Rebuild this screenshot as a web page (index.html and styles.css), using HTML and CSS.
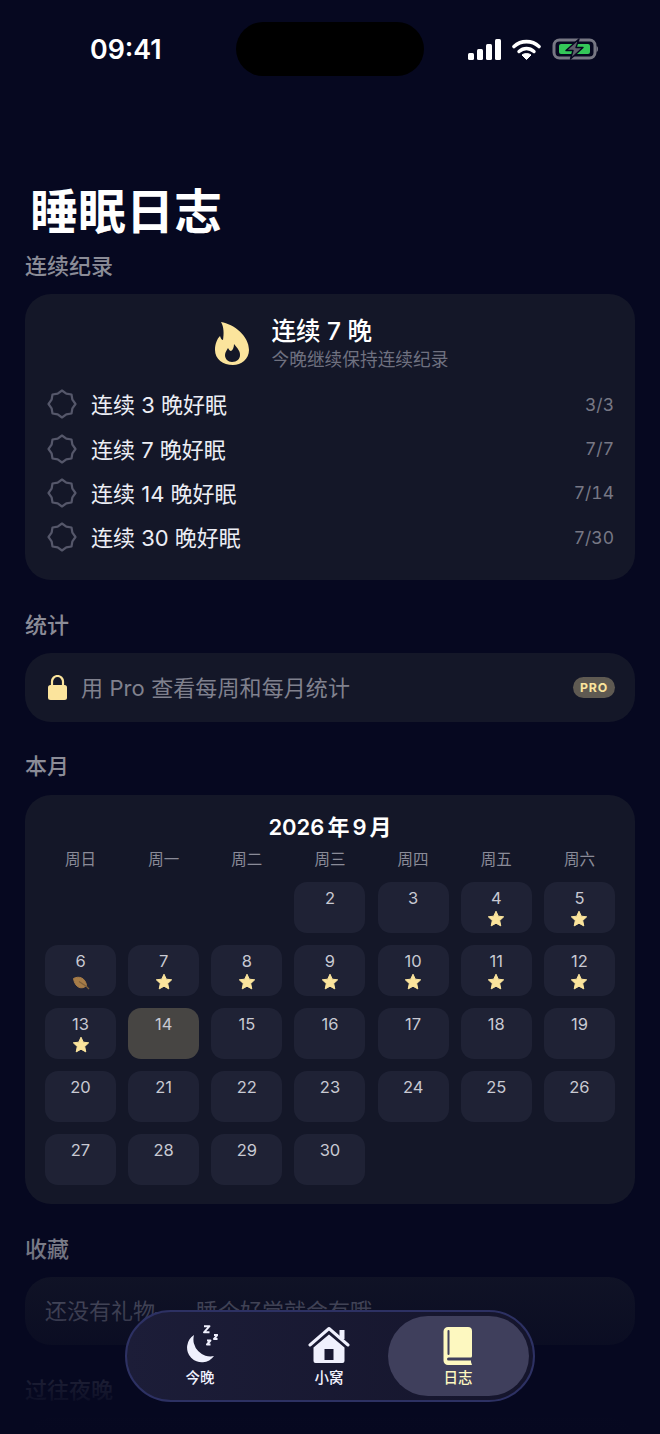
FILE: index.html
```html
<!DOCTYPE html>
<html lang="zh-CN">
<head>
    <meta charset="UTF-8">
    <meta name="viewport" content="width=device-width, initial-scale=1.0">
    <title>睡眠日志</title>
    <link rel="stylesheet" href="styles.css">
</head>
<body>
<svg class="defs" width="0" height="0">
    <symbol id="star" viewBox="0 0 18 18">
        <path d="M9 1.200l2.300 5 5.400.6-4 3.700 1.100 5.400L9 13.200l-4.800 2.700 1.100-5.400-4-3.700 5.400-.6z" fill="#fbe49c" stroke="#fbe49c" stroke-linejoin="round"/>
    </symbol>
    <symbol id="badge" viewBox="0 0 30 30">
        <polygon points="15,1.500 19.300,4.600 24.500,5.500 25.400,10.700 28.500,15 25.400,19.300 24.500,24.500 19.300,25.400 15,28.500 10.700,25.400 5.500,24.500 4.600,19.300 1.500,15 4.600,10.700 5.500,5.500 10.700,4.600" fill="none" stroke="#55576a" stroke-width="2.200" stroke-linejoin="round"/>
    </symbol>
</svg>

<div class="page">
    <div class="status-bar">
        <span class="time">09:41</span>
        <div class="island"></div>
        <div class="status-icons">
            <svg width="33" height="21" viewBox="0 0 33 21">
                <rect x="0" y="14" width="6" height="7" rx="1.500" fill="#fff"/>
                <rect x="9" y="10" width="6" height="11" rx="1.500" fill="#fff"/>
                <rect x="18" y="5" width="6" height="16" rx="1.500" fill="#fff"/>
                <rect x="27" y="0" width="6" height="21" rx="1.500" fill="#fff"/>
            </svg>
            <svg width="29" height="21" viewBox="0 0 29 21">
                <path d="M2 7.500C9 1 20 1 27 7.500" fill="none" stroke="#fff" stroke-width="3.600" stroke-linecap="round"/>
                <path d="M7 12.500C11.500 8.500 17.500 8.500 22 12.500" fill="none" stroke="#fff" stroke-width="3.400" stroke-linecap="round"/>
                <path d="M14.500 20.500L10 16c2.700-2 6.300-2 9 0z" fill="#fff" stroke="#fff" stroke-linejoin="round"/>
            </svg>
            <svg width="46" height="22" viewBox="0 0 46 22">
                <rect x="2" y="2" width="41" height="18" rx="5.500" fill="none" stroke="#767783" stroke-width="3"/>
                <rect x="7" y="6" width="31" height="10" rx="2" fill="#34c759"/>
                <path d="M44.500 8v6c1.200-.4 1.500-1.500 1.500-3s-.3-2.600-1.500-3z" fill="#767783"/>
                <path d="M27 1L14 12.500h7L18.500 21 31 9.500h-7z" fill="#5f606c" stroke="#060820" stroke-width="1.400" stroke-linejoin="round"/>
            </svg>
        </div>
    </div>

    <h1 class="title">睡眠日志</h1>

    <h2 class="section-label">连续纪录</h2>
    <section class="card streak-card">
        <div class="streak-head">
            <svg width="37" height="46" viewBox="0 0 37 46">
                <path d="M7 2C20 4 35 16 35 30 35 39 27 45 19 45 9 45 1 39 1 30 1 24 3 19 6 16 7 19 8 20 9 20 10 14 10 7 7 2z" fill="#fbe49c"/>
                <path d="M20 24C24 29 26 31 26 35 26 39 23 42 18 42 14 42 11 39 11 35 11 32 13 30 14 28 15 30 16 31 17 31 19 30 20 27 20 24z" fill="#141728"/>
            </svg>
            <div>
                <div class="streak-title">连续 7 晚</div>
                <div class="streak-sub">今晚继续保持连续纪录</div>
            </div>
        </div>
        <ul class="goal-list">
            <li class="goal"><svg class="goal-icon"><use href="#badge"/></svg><span class="goal-name">连续 3 晚好眠</span><span class="goal-count">3/3</span></li>
            <li class="goal"><svg class="goal-icon"><use href="#badge"/></svg><span class="goal-name">连续 7 晚好眠</span><span class="goal-count">7/7</span></li>
            <li class="goal"><svg class="goal-icon"><use href="#badge"/></svg><span class="goal-name">连续 14 晚好眠</span><span class="goal-count">7/14</span></li>
            <li class="goal"><svg class="goal-icon"><use href="#badge"/></svg><span class="goal-name">连续 30 晚好眠</span><span class="goal-count">7/30</span></li>
        </ul>
    </section>

    <h2 class="section-label">统计</h2>
    <section class="card pro-card">
        <svg width="19" height="25" viewBox="0 0 19 25">
            <path d="M4 11V6.500a5.500 5.500 0 0 1 11 0V11" fill="none" stroke="#fbe49c" stroke-width="2.200"/>
            <rect x="0" y="10" width="19" height="15" rx="2.500" fill="#fbe49c"/>
        </svg>
        <span class="pro-text">用 Pro 查看每周和每月统计</span>
        <span class="pro-badge">PRO</span>
    </section>

    <h2 class="section-label">本月</h2>
    <section class="card calendar">
        <div class="cal-title">2026 年 9 月</div>
        <div class="weekdays">
            <span>周日</span><span>周一</span><span>周二</span><span>周三</span><span>周四</span><span>周五</span><span>周六</span>
        </div>
        <div class="days">
            <div class="blank"></div><div class="blank"></div><div class="blank"></div>
            <div class="day">2</div>
            <div class="day">3</div>
            <div class="day">4<svg class="mark"><use href="#star"/></svg></div>
            <div class="day">5<svg class="mark"><use href="#star"/></svg></div>
            <div class="day">6
                <svg class="mark" viewBox="0 0 18 18">
                    <path d="M1.500 5.500C7 2.500 13.500 5 14.500 12.500 10 17 3 15 1.500 5.500z" fill="#a67c48" stroke="#a67c48" stroke-linejoin="round"/>
                    <path d="M7 8.500L14.500 13.500 17 16" fill="none" stroke="#7d5f3a" stroke-width="1.200"/>
                </svg>
            </div>
            <div class="day">7<svg class="mark"><use href="#star"/></svg></div>
            <div class="day">8<svg class="mark"><use href="#star"/></svg></div>
            <div class="day">9<svg class="mark"><use href="#star"/></svg></div>
            <div class="day">10<svg class="mark"><use href="#star"/></svg></div>
            <div class="day">11<svg class="mark"><use href="#star"/></svg></div>
            <div class="day">12<svg class="mark"><use href="#star"/></svg></div>
            <div class="day">13<svg class="mark"><use href="#star"/></svg></div>
            <div class="day today">14</div>
            <div class="day">15</div>
            <div class="day">16</div>
            <div class="day">17</div>
            <div class="day">18</div>
            <div class="day">19</div>
            <div class="day">20</div>
            <div class="day">21</div>
            <div class="day">22</div>
            <div class="day">23</div>
            <div class="day">24</div>
            <div class="day">25</div>
            <div class="day">26</div>
            <div class="day">27</div>
            <div class="day">28</div>
            <div class="day">29</div>
            <div class="day">30</div>
        </div>
    </section>

    <h2 class="section-label">收藏</h2>
    <section class="card gift-card">还没有礼物<span class="gift-dash">——</span>睡个好觉就会有哦</section>

    <h2 class="section-label">过往夜晚</h2>
    <section class="card past-card"></section>

    <div class="fade"></div>

    <nav class="tab-bar">
        <a class="tab">
            <svg width="36" height="40" viewBox="0 0 36 40">
                <path d="M12 10A14.800 14.800 0 1 0 32 31 17 17 0 0 1 12 10z" fill="#eff0fd"/>
                <path d="M22 1.200h5.500L22 7.300h5.500M32 10h3.500L32 14h3.500M25 15.500h3.500L25 19.500h3.500" fill="none" stroke="#eff0fd" stroke-width="1.900" stroke-linejoin="round"/>
            </svg>
            <span>今晚</span>
        </a>
        <a class="tab">
            <svg width="42" height="40" viewBox="0 0 42 40">
                <path d="M2 20L21 3.500 40 20" fill="none" stroke="#eff0fd" stroke-width="3" stroke-linecap="round" stroke-linejoin="round"/>
                <rect x="31.500" y="5" width="5" height="9" fill="#eff0fd"/>
                <path fill-rule="evenodd" d="M21 9.500L36.500 22.500V36a2 2 0 0 1-2 2H7.500a2 2 0 0 1-2-2V22.500zM16.500 24v11h9V24z" fill="#eff0fd"/>
            </svg>
            <span>小窝</span>
        </a>
        <a class="tab active">
            <svg width="30" height="40" viewBox="0 0 30 40">
                <path d="M5 2h20a4 4 0 0 1 4 4v25a3 3 0 0 1-1.500 2.500L28 35v2l1 3H5a4.500 4.500 0 0 1-4.500-4.500V6.500A4.500 4.500 0 0 1 5 2z" fill="#fdf8c0"/>
                <rect x="4.500" y="5" width="2" height="25" rx="1" fill="#3f3f5c"/>
                <path d="M5.500 32.500H30v3H5.500a1.500 1.500 0 0 1 0-3z" fill="#3f3f5c"/>
            </svg>
            <span>日志</span>
        </a>
    </nav>
</div>
</body>
</html>
```

FILE: styles.css
```css
* {
    box-sizing: border-box;
}
body {
    margin: 0;
    background-color: #060820;
    font-family: Inter, "Noto Sans CJK SC", sans-serif;
}
.defs {
    position: absolute;
}
.page {
    position: relative;
    width: 660px;
    height: 1434px;
    padding: 0 25px;
    overflow: hidden;
    background-color: #060820;
    color: #fff;
}

/* status bar */
.status-bar {
    height: 98px;
    padding-top: 22px;
    position: relative;
}
.time {
    position: absolute;
    left: 65px;
    top: 32px;
    font-size: 26.800px;
    line-height: 34px;
    font-weight: 600;
}
.island {
    width: 188px;
    height: 54px;
    margin: 0 auto;
    border-radius: 27px;
    background-color: #000;
}
.status-icons {
    position: absolute;
    right: 37px;
    top: 38px;
    display: flex;
    align-items: center;
    gap: 11px;
}

.title {
    margin: 86px 0 11px 5px;
    font-size: 48px;
    line-height: 56px;
    font-weight: 700;
}
.section-label {
    margin: 0;
    font-size: 22px;
    line-height: 30px;
    font-weight: 500;
    color: #8b8c97;
}
.card {
    background-color: #141728;
    border-radius: 26px;
    margin-top: 13px;
}

/* streak */
.streak-card {
    height: 286px;
    padding: 20px 21px 0 22px;
    margin-bottom: 30px;
}
.streak-head {
    display: flex;
    align-items: center;
    justify-content: center;
    gap: 21px;
    padding-left: 1px;
}
.streak-title {
    font-size: 24.500px;
    line-height: 34px;
    font-weight: 500;
}
.streak-sub {
    font-size: 17.700px;
    line-height: 23px;
    color: #6f7180;
}
.goal-list {
    list-style-type: none;
    margin: 11px 0 0;
    padding: 0;
}
.goal {
    display: flex;
    align-items: center;
    height: 44.400px;
}
.goal-icon {
    width: 30px;
    height: 30px;
    margin-right: 14px;
}
.goal-name {
    flex: 1;
    margin-bottom: 2px;
    font-size: 22px;
    color: #eceef5;
}
.goal-count {
    font-size: 17.500px;
    font-variant-numeric: tabular-nums;
    color: #777885;
}

/* pro */
.pro-card {
    display: flex;
    align-items: center;
    height: 69px;
    padding: 0 20px 0 23px;
    margin-bottom: 29px;
}
.pro-text {
    flex: 1;
    margin: 0 0 4px 14px;
    font-size: 22px;
    letter-spacing: 0.1px;
    color: #80818e;
}
.pro-badge {
    padding: 0 7px;
    height: 21px;
    border-radius: 11px;
    background-color: #5f5a52;
    color: #fbe49c;
    font-size: 12.300px;
    line-height: 21px;
    font-weight: 700;
    letter-spacing: 0.8px;
}

/* calendar */
.calendar {
    height: 409px;
    padding: 18px 20px 0;
    margin: 14px 0 30px;
}
.cal-title {
    text-align: center;
    font-size: 22px;
    line-height: 28px;
    font-weight: 600;
    word-spacing: -2.500px;
}
.weekdays,
.days {
    display: grid;
    grid-template-columns: repeat(7, 71px);
    column-gap: 12.170px;
}
.weekdays {
    margin-top: 6px;
    text-align: center;
    font-size: 15.500px;
    line-height: 26px;
    color: #8a8b98;
}
.days {
    margin-top: 9px;
    grid-auto-rows: 51px;
    row-gap: 12px;
}
.day {
    display: flex;
    flex-direction: column;
    align-items: center;
    padding-top: 5px;
    border-radius: 13px;
    background-color: #1f2235;
    color: #c8c9d2;
    font-size: 16.500px;
    line-height: 22px;
}
.today {
    background-color: #474543;
}
.mark {
    width: 18px;
    height: 18px;
    margin-top: 1px;
}

/* bottom of the list, fading out under the tab bar */
.gift-card {
    height: 68px;
    padding-left: 20px;
    font-size: 22px;
    line-height: 68px;
    color: #6f7180;
    margin-bottom: 30px;
}
.gift-dash {
    font-size: 20.500px;
}
.past-card {
    height: 120px;
}
.fade {
    position: absolute;
    left: 0;
    right: 0;
    top: 1220px;
    height: 214px;
    background: linear-gradient(to bottom, rgba(6, 8, 32, 0), rgba(6, 8, 32, 0.5) 45%, rgba(6, 8, 32, 0.95) 85%, #060820);
}

/* tab bar */
.tab-bar {
    position: absolute;
    left: 125px;
    top: 1310px;
    width: 410px;
    height: 92px;
    display: flex;
    justify-content: center;
    padding-right: 2px;
    border: 2px solid #2d3163;
    border-radius: 46px;
    background: linear-gradient(to right, #1c1d38, #15152c);
}
.tab {
    position: relative;
    width: 129px;
    display: flex;
    flex-direction: column;
    align-items: center;
    padding-top: 13px;
    font-size: 14.500px;
    line-height: 20px;
    font-weight: 500;
    color: #eff0fd;
}
.tab svg,
.tab span {
    position: relative;
}
.tab span {
    margin-top: 3px;
}
.active {
    color: #fdf8c0;
}
.active::before {
    content: "";
    position: absolute;
    left: -6px;
    right: -6px;
    top: 4px;
    bottom: 4px;
    border-radius: 40px;
    background-color: #3f3f5c;
}
```
